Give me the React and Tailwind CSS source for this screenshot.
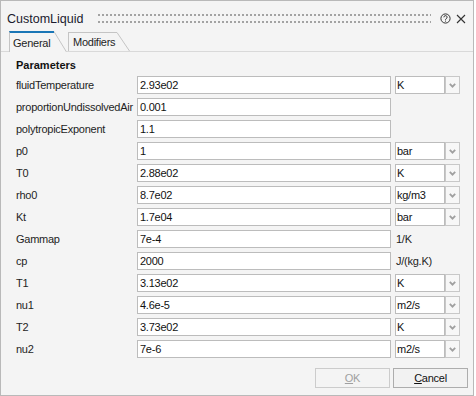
import React from "react";

const rows = [
  ["fluidTemperature", "2.93e02", "K", "combo"],
  ["proportionUndissolvedAir", "0.001", "", "none"],
  ["polytropicExponent", "1.1", "", "none"],
  ["p0", "1", "bar", "combo"],
  ["T0", "2.88e02", "K", "combo"],
  ["rho0", "8.7e02", "kg/m3", "combo"],
  ["Kt", "1.7e04", "bar", "combo"],
  ["Gammap", "7e-4", "1/K", "text"],
  ["cp", "2000", "J/(kg.K)", "text"],
  ["T1", "3.13e02", "K", "combo"],
  ["nu1", "4.6e-5", "m2/s", "combo"],
  ["T2", "3.73e02", "K", "combo"],
  ["nu2", "7e-6", "m2/s", "combo"],
];

function Chevron() {
  return (
    <svg width="7" height="5" viewBox="0 0 7 5">
      <path d="M0.8 0.8 L3.5 3.6 L6.2 0.8" fill="none" stroke="#a0a0a0" strokeWidth="1.8" />
    </svg>
  );
}

function Row({ label, value, unit, kind }) {
  return (
    <div className="flex h-[22px] items-center">
      <div className="w-[121px] shrink-0 whitespace-nowrap">{label}</div>
      <div className="flex h-[18px] w-[254px] shrink-0 items-center border border-[#bcbcbc] bg-white pl-[2px] text-[#111]">
        {value}
      </div>
      {kind === "combo" && (
        <div className="ml-[4px] flex h-[18px]">
          <div className="flex w-[50px] items-center border border-[#bcbcbc] bg-white pl-[1px] text-[#111]">
            {unit}
          </div>
          <div className="flex w-[15px] items-center justify-center border border-[#c8c8c8] bg-[#f7f7f7] pt-[1px]">
            <Chevron />
          </div>
        </div>
      )}
      {kind === "text" && <div className="ml-[5px] whitespace-nowrap">{unit}</div>}
    </div>
  );
}

function Slant({ h, top }) {
  return (
    <svg width="13" height={h} viewBox={`0 0 13 ${h}`} className="block">
      <polygon points={`0,0 0.5,0 13,${h} 0,${h}`} fill="#f4f4f4" />
      <line x1="0" y1={top} x2="12.5" y2={h} stroke="#c4c4c4" strokeWidth="1" />
    </svg>
  );
}

export default function App() {
  return (
    <div className="h-[396px] w-[476px] bg-white">
      <div
        className="flex h-[396px] w-[474px] flex-col border border-[#b9b9b9] bg-[#f4f4f4] text-[11px] tracking-[-0.25px] text-[#1e1e1e]"
        style={{ fontFamily: '"Liberation Sans", Arial, sans-serif' }}
      >
        {/* title bar */}
        <div className="flex h-[30px] shrink-0 items-start pl-[6px] pt-[10px]">
          <div className="text-[12.5px] leading-[16px] tracking-normal text-[#1a1a2e]">CustomLiquid</div>
          <div className="ml-[15px] mt-[3px] w-[333px]">
            <svg width="333" height="9" className="block">
              <defs>
                <pattern id="grip" width="4" height="7" patternUnits="userSpaceOnUse">
                  <rect x="0" y="0" width="2" height="2" fill="#a3a3a3" />
                </pattern>
              </defs>
              <rect x="0" y="0" width="333" height="9" fill="url(#grip)" />
            </svg>
          </div>
          <div className="ml-[9px] mt-[2px] flex items-center gap-[5px]">
            <svg width="11" height="11" viewBox="0 0 11 11">
              <circle cx="5.5" cy="5.5" r="4.6" fill="none" stroke="#333" strokeWidth="1" />
              <path d="M3.9 4.3 a1.6 1.6 0 1 1 2.3 1.4 c-0.5 0.3 -0.7 0.5 -0.7 1.1" fill="none" stroke="#333" strokeWidth="1" />
              <rect x="5" y="7.6" width="1" height="1" fill="#333" />
            </svg>
            <svg width="10" height="10" viewBox="0 0 10 10">
              <path d="M1 1 L9 9 M9 1 L1 9" stroke="#333" strokeWidth="1.1" />
            </svg>
          </div>
        </div>

        {/* tab strip */}
        <div className="flex h-[21px] shrink-0 items-end border-b border-[#d9d9d9] pl-[8px]">
          <div className="relative z-10 mb-[-1px] flex h-[21px] bg-[#f4f4f4]">
            <div className="flex w-[45px] items-center border-l border-t-2 border-l-[#c4c4c4] border-t-[#1a76b6] pl-[3px] pt-[1px]">
              General
            </div>
            <Slant h={21} top={0.5} />
          </div>
          <div className="ml-[1px] flex h-[19px]">
            <div className="flex w-[49px] items-center border-l border-t border-[#c4c4c4] pl-[4px]">Modifiers</div>
            <Slant h={19} top={0.5} />
          </div>
        </div>

        {/* content */}
        <div className="flex flex-col pl-[15px]">
          <div className="h-[22px] pt-[6px] text-[11px] font-bold leading-[14px] tracking-normal text-[#111]">
            Parameters
          </div>
          {rows.map((r) => (
            <Row key={r[0]} label={r[0]} value={r[1]} unit={r[2]} kind={r[3]} />
          ))}
        </div>

        {/* buttons */}
        <div className="mt-[8px] flex justify-end gap-[3px] pr-[5px]">
          <div className="flex h-[20px] w-[75px] items-center justify-center border border-[#cccccc] text-[#a0a0a0]">
            <span><span className="underline">O</span>K</span>
          </div>
          <div className="flex h-[20px] w-[75px] items-center justify-center border border-[#adadad] bg-[#f2f2f2] text-[#111]">
            <span><span className="underline">C</span>ancel</span>
          </div>
        </div>
      </div>
    </div>
  );
}
